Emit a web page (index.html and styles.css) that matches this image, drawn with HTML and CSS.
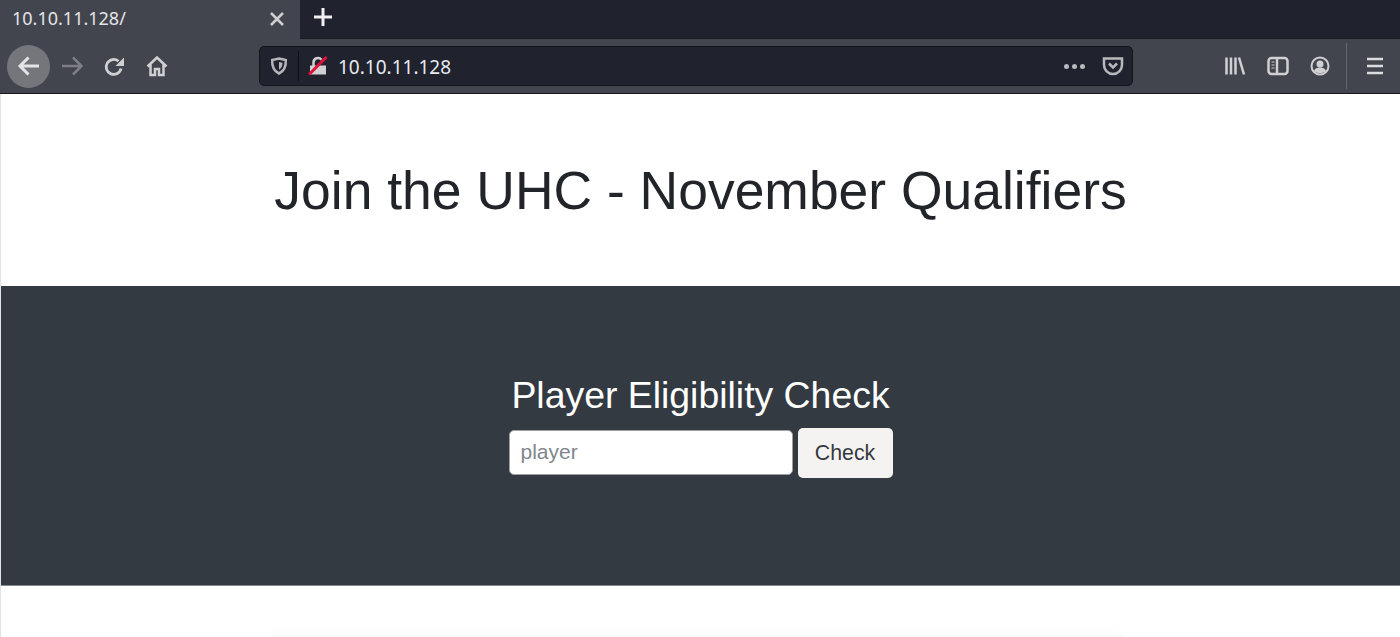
FILE: index.html
```html
<!DOCTYPE html>
<html lang="en">
<head>
	<title>10.10.11.128/</title>
	<meta charset="utf-8">
	<link rel="stylesheet" href="styles.css">
</head>
<body>

	<div class="browser-chrome">
		<div class="tab-bar">
			<div class="tab">
				<span class="tab-title">10.10.11.128/</span>
				<svg class="tab-close" width="16" height="16" viewBox="0 0 16 16"><path d="M2 2l12 12M14 2L2 14"/></svg>
			</div>
			<svg class="tab-new" width="20" height="20" viewBox="0 0 20 20"><path d="M10 1v18M1 10h18"/></svg>
		</div>

		<div class="toolbar">
			<div class="nav-buttons">
				<span class="back-button">
					<svg width="26" height="26" viewBox="0 0 26 26"><path d="M4 13h19M12.500 4.500L4 13l8.500 8.500"/></svg>
				</span>
				<svg class="forward" width="24" height="24" viewBox="0 0 24 24"><path d="M2 12h19M13 3.500l8.500 8.500-8.500 8.500"/></svg>
				<svg class="reload" width="22" height="22" viewBox="0 0 22 22"><path d="M18 13.500a7.500 7.500 0 1 1-2.500-7.300"/><path class="solid" d="M21 2.500v8.500h-8.500z"/></svg>
				<svg class="home" width="24" height="24" viewBox="0 0 24 24"><path d="M2.500 12.500L12 3.500l9.500 9M5.500 10.500v10.500h4.500v-6h4v6h4.500V10.500"/></svg>
			</div>

			<div class="url-bar">
				<svg class="shield" width="18" height="18" viewBox="0 0 18 18"><path d="M9 1.500l6.800 1.500c.3 6-1 10.800-6.800 13.500C3.200 13.800 1.900 9 2.200 3z"/><path class="solid" d="M9 5l3.500.8c0 3-.7 5-3.500 7z"/></svg>
				<span class="url-divider"></span>
				<svg class="lock" width="20" height="20" viewBox="0 0 20 20"><path class="solid" d="M2 9.500h16v9H2z"/><path d="M5.500 10V6.500a4.500 4.500 0 0 1 8 -2.800"/><path class="slash" d="M1 18.500L18.500 1"/></svg>
				<span class="url-text">10.10.11.128</span>
				<span class="url-dots"><i></i><i></i><i></i></span>
				<svg class="pocket" width="22" height="20" viewBox="0 0 22 20"><path d="M2 2.500h18v6.500a9 9 0 0 1-18 0z"/><path d="M7 7.500l4 4 4-4"/></svg>
			</div>

			<div class="tools">
				<svg class="library" width="22" height="20" viewBox="0 0 22 20"><path d="M2.500 1.500v17M7 1.500v17M11.500 1.500v17M15 1.500l5 17"/></svg>
				<svg class="sidebar" width="22" height="20" viewBox="0 0 22 20"><rect x="1.500" y="2" width="19" height="16" rx="3"/><path d="M10 2v16"/><path class="thin" d="M4.500 6h3M4.500 9h3M4.500 12h3"/></svg>
				<svg class="account" width="20" height="20" viewBox="0 0 20 20"><circle cx="10" cy="10" r="8.500"/><circle class="solid" cx="10" cy="8" r="3.500"/><path class="solid" d="M4 15c1-3 3-3.500 6-3.500s5 .5 6 3.500c-3 2.800-9 2.800-12 0z"/></svg>
				<span class="tools-divider"></span>
				<svg class="menu" width="18" height="18" viewBox="0 0 18 18"><path d="M1 2h16M1 9h16M1 16h16"/></svg>
			</div>
		</div>
	</div>

	<main class="page">
		<header class="page-header">
			<h1>Join the UHC - November Qualifiers</h1>
		</header>

		<section class="hero">
			<h3>Player Eligibility Check</h3>
			<form class="check-form">
				<input class="player-input" type="text" placeholder="player">
				<button class="check-button" type="button">Check</button>
			</form>
		</section>

		<div class="below-hero">
			<div class="card-edge"></div>
		</div>
	</main>

</body>
</html>
```

FILE: styles.css
```css
* {
	box-sizing: border-box;
}

html, body {
	height: 100%;
	margin: 0;
	padding: 0;
	overflow: hidden;
}

body {
	display: flex;
	flex-direction: column;
	background: #fff;
	font-family: "Liberation Sans", Arial, sans-serif;
}

svg {
	display: block;
	flex: none;
	fill: none;
	stroke: #d0d0d3;
	stroke-width: 2.500;
}

svg .solid {
	fill: #d0d0d3;
	stroke: none;
}

/* Browser chrome */

.browser-chrome {
	height: 94px;
	flex: none;
	background: #42454e;
	border-bottom: 1px solid #16171d;
}

.tab-bar {
	height: 39px;
	display: flex;
	align-items: center;
	background: #20222e;
	border-bottom: 1px solid #1a1b24;
}

.tab {
	width: 300px;
	height: 39px;
	display: flex;
	align-items: center;
	justify-content: space-between;
	padding: 0 15px 3px 12px;
	background: #42454e;
}

.tab-title {
	font-family: "Noto Sans", sans-serif;
	font-size: 18px;
	color: #e3e4e6;
}

.tab-close {
	margin-top: 3px;
}

.tab-new {
	margin: -4px 0 0 13px;
	stroke: #f0f0f2;
	stroke-width: 3;
}

.toolbar {
	height: 54px;
	display: flex;
	align-items: center;
	padding: 0 0 0 7px;
}

.nav-buttons {
	width: 252px;
	display: flex;
	align-items: center;
}

.back-button {
	width: 43px;
	height: 43px;
	display: flex;
	align-items: center;
	justify-content: center;
	border-radius: 50%;
	background: #74767c;
}

.back-button svg {
	stroke: #e4e4e6;
	stroke-width: 3;
}

.forward {
	margin-left: 10px;
	stroke: #7d7f85;
}

.reload {
	margin-left: 19px;
}

.reload path {
	stroke-width: 2.800;
}

.home {
	margin-left: 20px;
}

.url-bar {
	width: 874px;
	height: 40px;
	display: flex;
	align-items: center;
	padding: 0 8px 0 10px;
	background: #20222e;
	border: 1px solid #15161c;
	border-radius: 5px;
}

.shield {
	stroke: #b4b5b8;
}

.shield .solid {
	fill: #b4b5b8;
}

.url-divider {
	width: 1px;
	height: 30px;
	margin: 0 9px 0 10px;
	background: #0f1015;
}

.lock .slash {
	stroke: #e0103a;
	stroke-width: 3;
}

.url-text {
	flex: 1;
	margin-left: 10px;
	padding-top: 1px;
	font-family: "Noto Sans", sans-serif;
	font-size: 19px;
	color: #e6eaf0;
}

.url-dots {
	display: flex;
	gap: 3px;
	margin-right: 17px;
}

.url-dots i {
	width: 5px;
	height: 5px;
	border-radius: 50%;
	background: #b8b9bc;
}

.pocket {
	stroke: #b8b9bc;
}

.tools {
	flex: 1;
	display: flex;
	align-items: center;
	padding-left: 91px;
}

.sidebar {
	margin-left: 21px;
}

.sidebar .thin {
	stroke-width: 1.200;
}

.account {
	margin-left: 21px;
	stroke-width: 2;
}

.tools-divider {
	width: 1px;
	height: 46px;
	margin: 0 19px 0 16px;
	background: #65676e;
}

.menu {
	stroke: #dcdcdf;
}

/* Page */

.page {
	flex: 1;
	display: flex;
	flex-direction: column;
	border-left: 1px solid #e2e2e2;
}

.page-header {
	height: 192px;
	flex: none;
	display: flex;
	align-items: center;
	justify-content: center;
}

h1 {
	margin: 0;
	font-size: 53.440px;
	font-weight: 400;
	color: #212529;
}

.hero {
	height: 300px;
	flex: none;
	display: flex;
	flex-direction: column;
	align-items: center;
	padding-top: 88px;
	background: #333a42;
	border-bottom: 1px solid #8a8b8d;
	color: #fff;
}

h3 {
	margin: 0 0 12px;
	font-size: 37.400px;
	font-weight: 400;
	line-height: 42px;
}

.check-form {
	display: flex;
	align-items: center;
	gap: 5px;
}

.player-input {
	width: 284px;
	height: 45px;
	margin-bottom: 2px;
	padding: 0 11px;
	background: #fff;
	border: 1px solid #9c9ea0;
	border-radius: 5px;
	font-family: inherit;
	font-size: 21px;
	outline: none;
}

.player-input::placeholder {
	color: #80868c;
	opacity: 1;
}

.check-button {
	width: 95px;
	height: 50px;
	padding: 0;
	background: #f5f3f1;
	border: none;
	border-radius: 5px;
	font-family: inherit;
	font-size: 21.300px;
	color: #343a40;
}

.below-hero {
	flex: 1;
}

.card-edge {
	width: 850px;
	height: 2px;
	margin: 49px 0 0 272px;
	background: #f9f9f9;
	box-shadow: 0 -2px 16px rgba(0, 0, 0, 0.09);
}
```
